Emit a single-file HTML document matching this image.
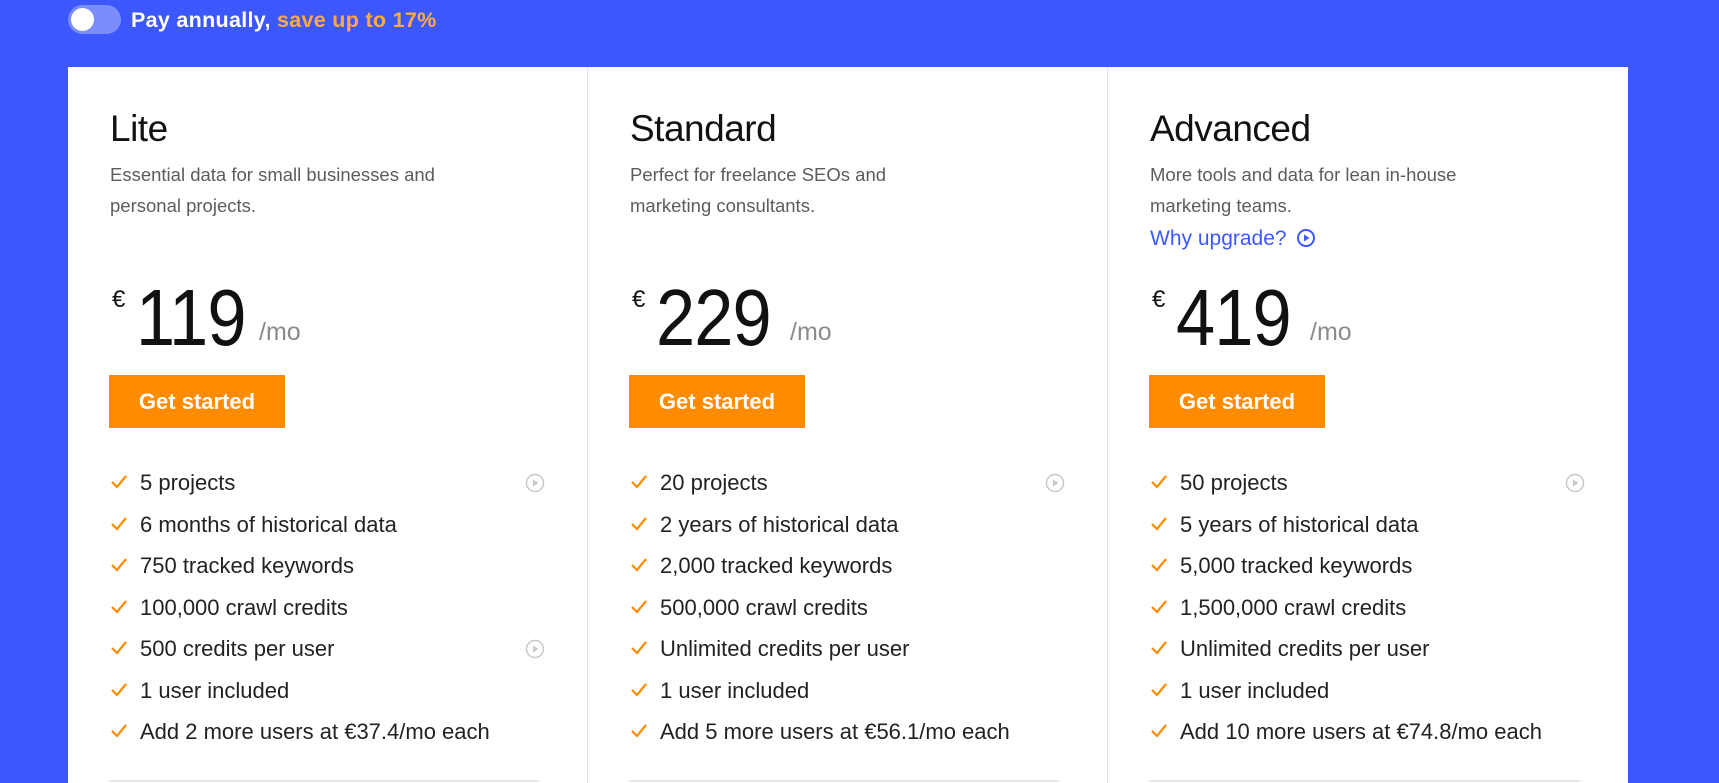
<!DOCTYPE html>
<html><head><meta charset="utf-8"><style>
*{margin:0;padding:0;box-sizing:border-box}
body{width:1719px;height:783px;overflow:hidden;background:#3c58fd;font-family:"Liberation Sans",sans-serif;position:relative}
.a{position:absolute;white-space:nowrap}
.tog{left:68px;top:5px;width:53px;height:29px;border-radius:15px;background:#7a8dfd}
.tog:after{content:"";position:absolute;left:3px;top:3px;width:23px;height:23px;border-radius:50%;background:#fff}
.hdr{left:131px;top:8px;font-size:21.5px;font-weight:bold;color:#fff;line-height:24px;letter-spacing:0.3px}
.hdr span{color:#ffa940}
.card{position:absolute;left:68px;top:67px;width:1560px;height:716px;background:#fff}
.col{position:absolute;top:0;height:716px;width:520px;border-right:1px solid #e4e4e4}
.col .t{left:42px;top:40px;font-size:37px;line-height:44px;color:#111;letter-spacing:-0.5px}
.col .d{left:42px;top:92px;font-size:18.5px;line-height:31px;color:#5c5c5c;white-space:normal;width:395px}
.col .w{left:42px;top:160px;font-size:21px;line-height:24px;color:#3c58fd}
.col .e{left:44px;top:218px;font-size:24px;line-height:30px;color:#111}
.col .p{left:68px;top:210px;font-size:80px;line-height:82px;letter-spacing:-1px;color:#111;transform:scaleX(0.88);transform-origin:left}
.col .m{top:250px;font-size:25px;line-height:30px;color:#8a8a8a}
.col .b{left:41px;top:308px;width:176px;height:53px;background:#ff8b00;color:#fff;font-weight:bold;font-size:22px;line-height:53px;text-align:center}
.col ul{position:absolute;left:42px;top:404px;list-style:none}
.col li{height:41.5px;font-size:22px;line-height:24px;color:#222;position:relative;padding-left:30px;white-space:nowrap}
.col li svg.c{position:absolute;left:0;top:3px}
.pl{position:absolute;left:415px}
.line{position:absolute;left:41px;right:48px;top:713px;height:2px;background:#e6e6e6}
</style></head><body>
<div class="a tog"></div>
<div class="a hdr">Pay annually, <span>save up to 17%</span></div>
<div class="card">
<div class="col" style="left:0">
<div class="a t">Lite</div>
<div class="a d">Essential data for small businesses and personal projects.</div>
<div class="a e">€</div><div class="a p">119</div><div class="a m" style="left:191px">/mo</div>
<div class="a b">Get started</div>
<ul>
<li><svg class="c" width="18" height="16" viewBox="0 0 18 16"><path d="M2 8l5 5 9-11" stroke="#ff8b00" stroke-width="2.2" fill="none"/></svg>5 projects<svg class="pl" style="top:2px" width="20" height="20" viewBox="0 0 20 20"><circle cx="10" cy="10" r="8.5" stroke="#c8c8c8" stroke-width="1.5" fill="none"/><path d="M8 6.5v7l5.5-3.5z" fill="#c8c8c8"/></svg></li>
<li><svg class="c" width="18" height="16" viewBox="0 0 18 16"><path d="M2 8l5 5 9-11" stroke="#ff8b00" stroke-width="2.2" fill="none"/></svg>6 months of historical data</li>
<li><svg class="c" width="18" height="16" viewBox="0 0 18 16"><path d="M2 8l5 5 9-11" stroke="#ff8b00" stroke-width="2.2" fill="none"/></svg>750 tracked keywords</li>
<li><svg class="c" width="18" height="16" viewBox="0 0 18 16"><path d="M2 8l5 5 9-11" stroke="#ff8b00" stroke-width="2.2" fill="none"/></svg>100,000 crawl credits</li>
<li><svg class="c" width="18" height="16" viewBox="0 0 18 16"><path d="M2 8l5 5 9-11" stroke="#ff8b00" stroke-width="2.2" fill="none"/></svg>500 credits per user<svg class="pl" style="top:2px" width="20" height="20" viewBox="0 0 20 20"><circle cx="10" cy="10" r="8.5" stroke="#c8c8c8" stroke-width="1.5" fill="none"/><path d="M8 6.5v7l5.5-3.5z" fill="#c8c8c8"/></svg></li>
<li><svg class="c" width="18" height="16" viewBox="0 0 18 16"><path d="M2 8l5 5 9-11" stroke="#ff8b00" stroke-width="2.2" fill="none"/></svg>1 user included</li>
<li><svg class="c" width="18" height="16" viewBox="0 0 18 16"><path d="M2 8l5 5 9-11" stroke="#ff8b00" stroke-width="2.2" fill="none"/></svg>Add 2 more users at €37.4/mo each</li>
</ul>
<div class="line"></div>
</div>
<div class="col" style="left:520px">
<div class="a t">Standard</div>
<div class="a d" style="width:330px">Perfect for freelance SEOs and marketing consultants.</div>
<div class="a e">€</div><div class="a p">229</div><div class="a m" style="left:202px">/mo</div>
<div class="a b">Get started</div>
<ul>
<li><svg class="c" width="18" height="16" viewBox="0 0 18 16"><path d="M2 8l5 5 9-11" stroke="#ff8b00" stroke-width="2.2" fill="none"/></svg>20 projects<svg class="pl" style="top:2px" width="20" height="20" viewBox="0 0 20 20"><circle cx="10" cy="10" r="8.5" stroke="#c8c8c8" stroke-width="1.5" fill="none"/><path d="M8 6.5v7l5.5-3.5z" fill="#c8c8c8"/></svg></li>
<li><svg class="c" width="18" height="16" viewBox="0 0 18 16"><path d="M2 8l5 5 9-11" stroke="#ff8b00" stroke-width="2.2" fill="none"/></svg>2 years of historical data</li>
<li><svg class="c" width="18" height="16" viewBox="0 0 18 16"><path d="M2 8l5 5 9-11" stroke="#ff8b00" stroke-width="2.2" fill="none"/></svg>2,000 tracked keywords</li>
<li><svg class="c" width="18" height="16" viewBox="0 0 18 16"><path d="M2 8l5 5 9-11" stroke="#ff8b00" stroke-width="2.2" fill="none"/></svg>500,000 crawl credits</li>
<li><svg class="c" width="18" height="16" viewBox="0 0 18 16"><path d="M2 8l5 5 9-11" stroke="#ff8b00" stroke-width="2.2" fill="none"/></svg>Unlimited credits per user</li>
<li><svg class="c" width="18" height="16" viewBox="0 0 18 16"><path d="M2 8l5 5 9-11" stroke="#ff8b00" stroke-width="2.2" fill="none"/></svg>1 user included</li>
<li><svg class="c" width="18" height="16" viewBox="0 0 18 16"><path d="M2 8l5 5 9-11" stroke="#ff8b00" stroke-width="2.2" fill="none"/></svg>Add 5 more users at €56.1/mo each</li>
</ul>
<div class="line"></div>
</div>
<div class="col" style="left:1040px;border-right:none">
<div class="a t">Advanced</div>
<div class="a d" style="width:380px">More tools and data for lean in-house marketing teams.</div>
<div class="a w">Why upgrade? <svg style="vertical-align:-3px;margin-left:4px" width="20" height="20" viewBox="0 0 20 20"><circle cx="10" cy="10" r="8" stroke="#3c58fd" stroke-width="2" fill="none"/><path d="M8 6.5v7l5.5-3.5z" fill="#3c58fd"/></svg></div>
<div class="a e">€</div><div class="a p">419</div><div class="a m" style="left:202px">/mo</div>
<div class="a b">Get started</div>
<ul>
<li><svg class="c" width="18" height="16" viewBox="0 0 18 16"><path d="M2 8l5 5 9-11" stroke="#ff8b00" stroke-width="2.2" fill="none"/></svg>50 projects<svg class="pl" style="top:2px" width="20" height="20" viewBox="0 0 20 20"><circle cx="10" cy="10" r="8.5" stroke="#c8c8c8" stroke-width="1.5" fill="none"/><path d="M8 6.5v7l5.5-3.5z" fill="#c8c8c8"/></svg></li>
<li><svg class="c" width="18" height="16" viewBox="0 0 18 16"><path d="M2 8l5 5 9-11" stroke="#ff8b00" stroke-width="2.2" fill="none"/></svg>5 years of historical data</li>
<li><svg class="c" width="18" height="16" viewBox="0 0 18 16"><path d="M2 8l5 5 9-11" stroke="#ff8b00" stroke-width="2.2" fill="none"/></svg>5,000 tracked keywords</li>
<li><svg class="c" width="18" height="16" viewBox="0 0 18 16"><path d="M2 8l5 5 9-11" stroke="#ff8b00" stroke-width="2.2" fill="none"/></svg>1,500,000 crawl credits</li>
<li><svg class="c" width="18" height="16" viewBox="0 0 18 16"><path d="M2 8l5 5 9-11" stroke="#ff8b00" stroke-width="2.2" fill="none"/></svg>Unlimited credits per user</li>
<li><svg class="c" width="18" height="16" viewBox="0 0 18 16"><path d="M2 8l5 5 9-11" stroke="#ff8b00" stroke-width="2.2" fill="none"/></svg>1 user included</li>
<li><svg class="c" width="18" height="16" viewBox="0 0 18 16"><path d="M2 8l5 5 9-11" stroke="#ff8b00" stroke-width="2.2" fill="none"/></svg>Add 10 more users at €74.8/mo each</li>
</ul>
<div class="line"></div>
</div>
</div>
</body></html>
